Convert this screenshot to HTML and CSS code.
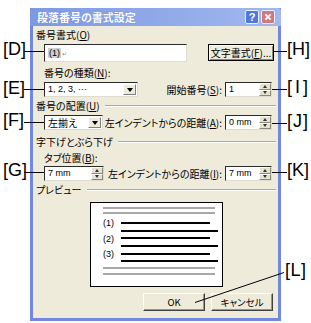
FILE: index.html
```html
<!DOCTYPE html>
<html lang="ja">
<head>
<meta charset="utf-8">
<link rel="stylesheet" href="styles.css">
</head>
<body>
<div class="stage">
  <div class="dialog">
    <div class="titlebar">
      <span class="title">段落番号の書式設定</span>
      <span class="tb-btn tb-help">?</span>
      <span class="tb-btn tb-close"><svg width="14" height="14" viewBox="0 0 14 14"><path d="M4 4 L10 10 M10 4 L4 10" stroke="#fff" stroke-width="2" fill="none"/></svg></span>
    </div>
    <div class="content">
      <div class="grp r1">番号書式(<u>O</u>)</div>
      <div class="row r2">
        <div class="field fmt"><span class="num">(1)</span><span class="ret">↵</span></div>
        <div class="btn btn-font">文字書式(<u>F</u>)...</div>
      </div>
      <div class="lbl r3">番号の種類(<u>N</u>):</div>
      <div class="row r4">
        <div class="field select sel-kind"><span class="val">1, 2, 3, ···</span><span class="dd"></span></div>
        <span class="lbl-r">開始番号(<u>S</u>):</span>
        <div class="field spin spin-r"><span class="val">1</span><span class="arr"><i class="up"></i><i class="dn"></i></span></div>
      </div>
      <div class="grp r5">番号の配置(<u>U</u>)<span class="etch"></span></div>
      <div class="row r6">
        <div class="field select sel-align"><span class="val jp">左揃え</span><span class="dd"></span></div>
        <span class="lbl-r">左インデントからの距離(<u>A</u>):</span>
        <div class="field spin spin-r"><span class="val">0 mm</span><span class="arr"><i class="up"></i><i class="dn"></i></span></div>
      </div>
      <div class="grp r7">字下げとぶら下げ<span class="etch"></span></div>
      <div class="lbl r8">タブ位置(<u>B</u>):</div>
      <div class="row r9">
        <div class="field spin spin-tab"><span class="val">7 mm</span><span class="arr"><i class="up"></i><i class="dn"></i></span></div>
        <span class="lbl-r">左インデントからの距離(<u>I</u>):</span>
        <div class="field spin spin-r"><span class="val">7 mm</span><span class="arr"><i class="up"></i><i class="dn"></i></span></div>
      </div>
      <div class="grp r10">プレビュー<span class="etch etch-p"></span></div>
      <div class="preview">
        <svg width="131" height="83" viewBox="0 0 131 83">
          <rect x="12" y="4" width="112" height="2" fill="#a8a8a8"/>
          <rect x="12" y="9" width="112" height="2" fill="#a8a8a8"/>
          <text x="12" y="23" class="pv-num">(1)</text>
          <rect x="30" y="19" width="89" height="2" fill="#000"/>
          <rect x="30" y="27" width="97" height="2" fill="#000"/>
          <text x="12" y="38.5" class="pv-num">(2)</text>
          <rect x="30" y="34" width="89" height="2" fill="#000"/>
          <rect x="30" y="42" width="97" height="2" fill="#000"/>
          <text x="12" y="54" class="pv-num">(3)</text>
          <rect x="30" y="50" width="89" height="2" fill="#000"/>
          <rect x="30" y="57" width="97" height="2" fill="#000"/>
          <rect x="12" y="64" width="112" height="2" fill="#a8a8a8"/>
          <rect x="12" y="70" width="112" height="2" fill="#a8a8a8"/>
        </svg>
      </div>
      <div class="row r12">
        <div class="btn btn-cmd">OK</div>
        <div class="btn btn-cmd">キャンセル</div>
      </div>
    </div>
  </div>

  <svg class="leaders" width="311" height="323" viewBox="0 0 311 323">
    <g stroke="#000" stroke-width="1" fill="none">
      <path d="M24 51.5 H44"/>
      <path d="M24 89.5 H44"/>
      <path d="M24 122.5 H44"/>
      <path d="M24 172.5 H44"/>
      <path d="M274 51.5 H287"/>
      <path d="M272 89.5 H287"/>
      <path d="M272 123.5 H287"/>
      <path d="M272 172.5 H287"/>
      <path d="M284 272.5 L195 302.5"/>
    </g>
  </svg>
  <span class="co co-d">[<span>D</span>]</span>
  <span class="co co-e">[<span>E</span>]</span>
  <span class="co co-f">[<span>F</span>]</span>
  <span class="co co-g">[<span>G</span>]</span>
  <span class="co co-h">[<span>H</span>]</span>
  <span class="co co-i">[<span>I</span>]</span>
  <span class="co co-j">[<span>J</span>]</span>
  <span class="co co-k">[<span>K</span>]</span>
  <span class="co co-l">[<span>L</span>]</span>
</div>
</body>
</html>
```

FILE: styles.css
```css
* { box-sizing: border-box; }

body {
  margin: 0;
  background: #fff;
  font-family: "Noto Sans CJK JP", "Noto Sans", sans-serif;
  font-size: 10px;
  color: #000;
  font-feature-settings: "palt" 1;
}

.stage {
  position: relative;
  width: 311px;
  height: 323px;
  padding: 8px 0 0 30px;
  overflow: hidden;
}

.dialog {
  width: 251px;
  height: 313px;
  display: flex;
  flex-direction: column;
  background: #efebdb;
  border: 3px solid #7188e0;
  border-top: 0;
}

.titlebar {
  height: 18px;
  margin: 0 -3px;
  padding: 0 6px 0 7px;
  display: flex;
  align-items: center;
  background: linear-gradient(90deg, #7d99e2, #a2b8ee);
  border-radius: 3px 3px 0 0;
}

.title {
  flex: 1;
  color: #fff;
  font-weight: 700;
  font-size: 11px;
  line-height: 18px;
  white-space: nowrap;
  text-shadow: 0 0 1px #5d7bd6;
}

.tb-btn {
  width: 14px;
  height: 14px;
  margin-left: 2px;
  border-radius: 2px;
  border: 1px solid #e8eefc;
  display: flex;
  align-items: center;
  justify-content: center;
  color: #fff;
  font-family: "Liberation Sans", sans-serif;
  font-weight: 700;
  font-size: 11px;
  line-height: 12px;
}
.tb-btn svg { display: block; }
.tb-help { background: #4f78dc; }
.tb-close { background: #cf7a82; }

.content {
  flex: 1;
  padding: 3px 6px 0 3px;
  display: flex;
  flex-direction: column;
}

.grp, .lbl {
  height: 12px;
  line-height: 12px;
  white-space: nowrap;
}
.grp { display: flex; align-items: center; }
.lbl { margin-left: 8px; }

.etch {
  flex: 1;
  height: 2px;
  margin: 0 -4px 0 5px;
  border-top: 1px solid #aca899;
  border-bottom: 1px solid #fff;
}
.etch-p { margin-left: 6px; }

.row {
  display: flex;
  align-items: center;
}

.r1 { margin-top: 0; }
.r2 { margin-top: 3px; height: 18px; align-items: flex-start; }
.r3 { margin-top: 5px; }
.r4 { margin-top: 3px; height: 15px; }
.r5 { margin-top: 3px; }
.r6 { margin-top: 3px; height: 15px; }
.r7 { margin-top: 6px; }
.r8 { margin-top: 4px; }
.r9 { margin-top: 2px; height: 15px; }
.r10 { margin-top: 3px; }
.r12 { margin-top: 6px; height: 18px; justify-content: flex-end; gap: 6px; margin-right: -1px; }

.field {
  background: #fff;
  border: 1px solid;
  border-color: #2a2a2a #dedbd0 #dedbd0 #2a2a2a;
  display: flex;
  align-items: center;
  font-family: "Liberation Sans", sans-serif;
  font-size: 9px;
}

.fmt {
  margin-left: 8px;
  width: 143px;
  height: 18px;
  padding-left: 3px;
}
.fmt .num {
  background: #cfcfcf;
  font-size: 9px;
  line-height: 10px;
  padding: 0 1px;
}
.fmt .ret {
  font-family: "DejaVu Sans", sans-serif;
  font-size: 6px;
  color: #888;
  margin-left: 1px;
  margin-top: 1px;
}

.btn {
  display: flex;
  align-items: center;
  justify-content: center;
  background: #efebdb;
  white-space: nowrap;
}

.btn-font {
  margin-left: auto;
  margin-right: -2px;
  width: 66px;
  height: 17px;
  border: 1px solid #000;
  box-shadow: inset 1px 1px #fff, inset -1px -1px #8c8878;
}

.btn-cmd {
  width: 62px;
  height: 18px;
  border: 1px solid;
  border-color: #fff #404040 #404040 #fff;
  box-shadow: inset -1px -1px #9a9686;
  font-size: 9.5px;
}

.select, .spin { height: 15px; }
.select { margin-left: 8px; }
.sel-kind { width: 94px; }
.sel-align { width: 59px; }
.spin-tab { margin-left: 8px; width: 60px; }
.spin-r { width: 47px; }

.val {
  flex: 1;
  padding-left: 3px;
  line-height: 13px;
  white-space: nowrap;
}
.val.jp {
  font-family: "Noto Sans CJK JP", sans-serif;
  font-size: 10px;
}

.dd {
  width: 13px;
  height: 11px;
  margin-right: 1px;
  background: #efebdb;
  border: 1px solid;
  border-color: #fff #808080 #808080 #fff;
  display: flex;
  align-items: center;
  justify-content: center;
}
.dd::after {
  content: "";
  border-left: 3.5px solid transparent;
  border-right: 3.5px solid transparent;
  border-top: 4px solid #000;
}

.arr {
  width: 12px;
  height: 13px;
  display: flex;
  flex-direction: column;
  background: #e6e2d2;
}
.arr i {
  flex: 1;
  display: flex;
  align-items: center;
  justify-content: center;
  border: 1px solid;
  border-color: #fff #8c8878 #8c8878 #fff;
}
.arr .up::after {
  content: "";
  border-left: 2.5px solid transparent;
  border-right: 2.5px solid transparent;
  border-bottom: 3px solid #333;
}
.arr .dn::after {
  content: "";
  border-left: 2.5px solid transparent;
  border-right: 2.5px solid transparent;
  border-top: 3px solid #333;
}

.lbl-r {
  margin-left: auto;
  margin-right: 3px;
  white-space: nowrap;
  line-height: 12px;
}

.preview {
  margin-top: 6px;
  margin-left: 54px;
  width: 133px;
  height: 85px;
  background: #fff;
  border: 1px solid #000;
}
.preview svg { display: block; }
.pv-num {
  font-family: "Liberation Sans", sans-serif;
  font-size: 9px;
  fill: #000;
}

.leaders {
  position: absolute;
  left: 0;
  top: 0;
  pointer-events: none;
}

.co {
  position: absolute;
  width: 21px;
  display: flex;
  justify-content: space-between;
  font-family: "Liberation Sans", sans-serif;
  font-size: 18px;
  line-height: 18px;
  font-weight: 400;
}
.co-d { left: 3px; top: 40px; }
.co-e { left: 3px; top: 79px; }
.co-f { left: 3px; top: 111px; }
.co-g { left: 3px; top: 161px; }
.co-h { left: 287px; top: 40px; }
.co-i { left: 287px; top: 78px; }
.co-j { left: 287px; top: 112px; }
.co-k { left: 287px; top: 161px; }
.co-l { left: 285px; top: 261px; }
```
